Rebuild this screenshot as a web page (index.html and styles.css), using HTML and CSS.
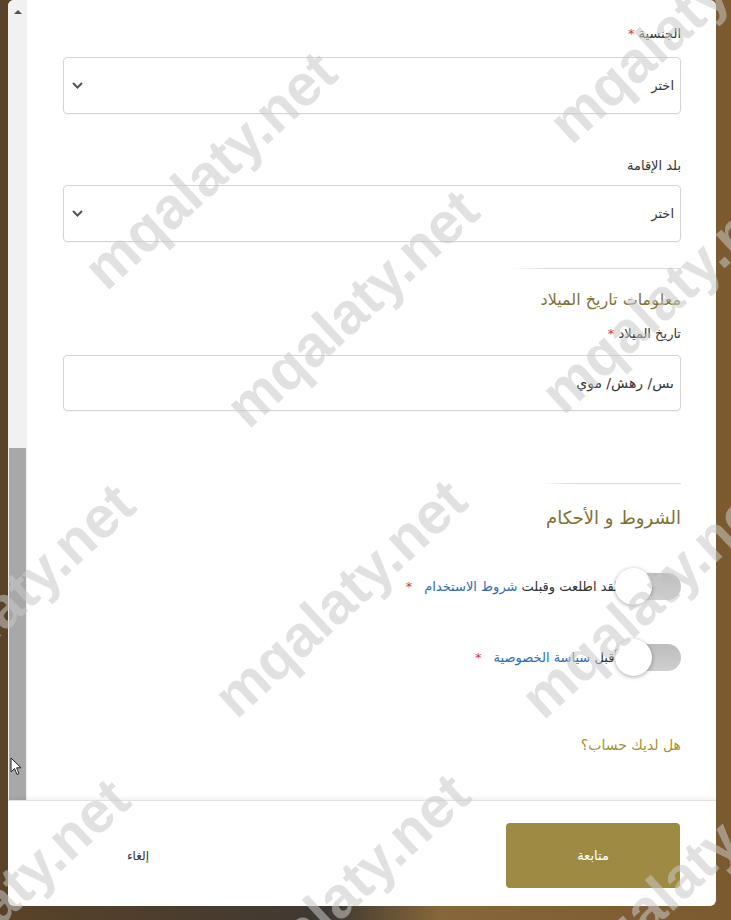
FILE: index.html
```html
<!DOCTYPE html>
<html lang="ar">
<head>
  <meta charset="UTF-8" />
  <meta name="viewport" content="width=device-width, initial-scale=1.0"/>
  <title>التسجيل</title>
  <link rel="stylesheet" href="styles.css">
</head>
<body>

<div class="modal">
  <div class="modal-body">
    <!-- fake scrollbar on the left (rtl page) -->
    <div class="scrollbar">
      <div class="scroll-arrow"></div>
      <div class="scroll-thumb"></div>
    </div>

    <div class="content">
      <div class="field">
        <label class="field-label">الجنسية <span class="req">*</span></label>
        <div class="select">
          <span>اختر</span>
          <svg class="chevron" width="11" height="7" viewBox="0 0 11 7"><polyline points="1,1 5.5,5.5 10,1" fill="none" stroke="#555" stroke-width="2"/></svg>
        </div>
      </div>

      <div class="field field-second">
        <label class="field-label">بلد الإقامة</label>
        <div class="select">
          <span>اختر</span>
          <svg class="chevron" width="11" height="7" viewBox="0 0 11 7"><polyline points="1,1 5.5,5.5 10,1" fill="none" stroke="#555" stroke-width="2"/></svg>
        </div>
      </div>

      <div class="divider"></div>

      <h3 class="section-title">معلومات تاريخ الميلاد</h3>
      <div class="field">
        <label class="field-label label-tight">تاريخ الميلاد <span class="req">*</span></label>
        <div class="select date-input">
          <span>ىس/ رهش/ موي</span>
        </div>
      </div>

      <div class="divider divider-short"></div>

      <h3 class="section-title terms-title">الشروط و الأحكام</h3>

      <div class="toggle-row">
        <div class="toggle"><span class="knob"></span></div>
        <span class="toggle-text">لقد اطلعت وقبلت <a href="#">شروط الاستخدام</a><span class="req">*</span></span>
      </div>

      <div class="toggle-row toggle-row-2">
        <div class="toggle"><span class="knob"></span></div>
        <span class="toggle-text">أقبل <a href="#">سياسة الخصوصية</a><span class="req">*</span></span>
      </div>

      <a href="#" class="login-link">هل لديك حساب؟</a>
    </div>
  </div>

  <div class="modal-footer">
    <button class="btn-primary">متابعة</button>
    <button class="btn-cancel">إلغاء</button>
  </div>
</div>

<!-- watermark overlay -->
<div class="watermark">
  <span class="wm wm-1">mqalaty.net</span>
  <span class="wm wm-2">mqalaty.net</span>
  <span class="wm wm-3">mqalaty.net</span>
  <span class="wm wm-4">mqalaty.net</span>
  <span class="wm wm-5">mqalaty.net</span>
  <span class="wm wm-6">mqalaty.net</span>
  <span class="wm wm-7">mqalaty.net</span>
  <span class="wm wm-8">mqalaty.net</span>
  <span class="wm wm-9">mqalaty.net</span>
  <span class="wm wm-10">mqalaty.net</span>
  <svg class="cursor" width="12" height="19" viewBox="0 0 12 19"><path d="M1 1 L1 15 L4.5 11.5 L7 17.5 L9 16.6 L6.6 10.8 L11 10.8 Z" fill="#fff" stroke="#222" stroke-width="1"/></svg>
</div>

</body>
</html>
```

FILE: styles.css
```css
html, body {
  margin: 0;
  height: 920px;
  overflow: hidden;
}

body {
  font-family: "DejaVu Sans", Arial, sans-serif;
  background: linear-gradient(to right, #5a4328 0%, #3f3832 45%, #86663a 60%, #7a5a2e 100%);
  position: relative;
}

.modal {
  margin-left: 8px;
  width: 708px;
  height: 906px;
  background: white;
  border-radius: 6px;
  overflow: hidden;
  display: flex;
  flex-direction: column;
}

.modal-body {
  height: 800px;
  display: flex;
}

.scrollbar {
  width: 19px;
  background: #f1f1f1;
  display: flex;
  flex-direction: column;
  justify-content: space-between;
  align-items: center;
}

.scroll-arrow {
  margin-top: 10px;
  width: 0;
  height: 0;
  border-left: 4px solid transparent;
  border-right: 4px solid transparent;
  border-bottom: 4px solid #505050;
}

.scroll-thumb {
  width: 17px;
  height: 352px;
  background: #a8a8a8;
}

.content {
  flex: 1;
  direction: rtl;
  padding: 25px 35px 0 36px;
}

.field-label {
  display: block;
  font-size: 13px;
  line-height: 18px;
  color: #333;
  margin-bottom: 14px;
}

.label-tight {
  margin-bottom: 12px;
}

.field-second {
  margin-top: 43px;
}

.field-second .field-label {
  margin-bottom: 10px;
}

.req {
  color: #d0364e;
}

.select {
  height: 55px;
  border: 1px solid #d4d4d4;
  border-radius: 4px;
  display: flex;
  align-items: center;
  justify-content: space-between;
  padding: 0 6px 0 8px;
  font-size: 13px;
  color: #333;
  box-shadow: 0 1px 2px rgba(0,0,0,0.04);
}

.date-input {
  height: 54px;
  font-size: 14px;
}

.chevron {
  display: block;
}

.divider {
  margin-top: 26px;
  width: 170px;
  height: 1px;
  background: linear-gradient(to left, #dcdcdc 80%, rgba(220,220,220,0));
}

.divider-short {
  margin-top: 72px;
  width: 138px;
}

.section-title {
  margin: 20px 0 14px;
  font-size: 16px;
  line-height: 22px;
  font-weight: normal;
  color: #7f7134;
}

.terms-title {
  margin: 23px 0 39px;
  font-size: 18px;
}

.toggle-row {
  display: flex;
  align-items: center;
  height: 36px;
  font-size: 13px;
  color: #333;
}

.toggle-row-2 {
  margin-top: 35px;
}

.toggle {
  position: relative;
  width: 59px;
  height: 27px;
  border-radius: 14px;
  background: linear-gradient(to bottom, #bdbdbd, #cfcfcf);
  flex-shrink: 0;
}

.knob {
  position: absolute;
  left: -7px;
  top: -5px;
  width: 37px;
  height: 37px;
  border-radius: 50%;
  background: white;
  box-shadow: 0 1px 4px rgba(0,0,0,0.35);
}

.toggle-text {
  margin-right: 4px;
}

.toggle-text a {
  color: #2f6eaf;
  text-decoration: none;
}

.toggle-text .req {
  margin-right: 12px;
}

.login-link {
  display: block;
  margin-top: 61px;
  font-size: 14px;
  line-height: 18px;
  color: #a8902e;
  text-decoration: none;
}

.modal-footer {
  flex: 1;
  direction: rtl;
  display: flex;
  justify-content: space-between;
  align-items: flex-start;
  padding: 22px 36px 0 55px;
  border-top: 1px solid #e2e2e2;
  box-shadow: 0 -2px 4px rgba(0,0,0,0.06);
}

.btn-primary {
  width: 174px;
  height: 65px;
  border: none;
  border-radius: 4px;
  background: #9e8a43;
  color: white;
  font-family: inherit;
  font-size: 13px;
}

.btn-cancel {
  width: 150px;
  height: 65px;
  border: none;
  background: transparent;
  color: #333;
  font-family: inherit;
  font-size: 12px;
}

.watermark {
  position: absolute;
  top: 0;
  left: 0;
  width: 731px;
  height: 920px;
  overflow: hidden;
  pointer-events: none;
}

.wm {
  position: absolute;
  font-family: "Liberation Sans", Arial, sans-serif;
  font-weight: bold;
  font-size: 58px;
  line-height: 1;
  color: rgba(200,200,200,0.55);
  white-space: nowrap;
  transform: translate(-50%, -50%) rotate(-42.6deg);
}

.wm-1 { left: 210px; top: 170px; }
.wm-2 { left: 675px; top: 24px; }
.wm-3 { left: 352px; top: 308px; }
.wm-4 { left: 667px; top: 294px; }
.wm-5 { left: 8px; top: 602px; }
.wm-6 { left: 340px; top: 598px; }
.wm-7 { left: 647px; top: 599px; }
.wm-8 { left: 3px; top: 897px; }
.wm-9 { left: 343px; top: 892px; }
.wm-10 { left: 686px; top: 872px; }

.cursor {
  position: absolute;
  left: 10px;
  top: 757px;
}
```
